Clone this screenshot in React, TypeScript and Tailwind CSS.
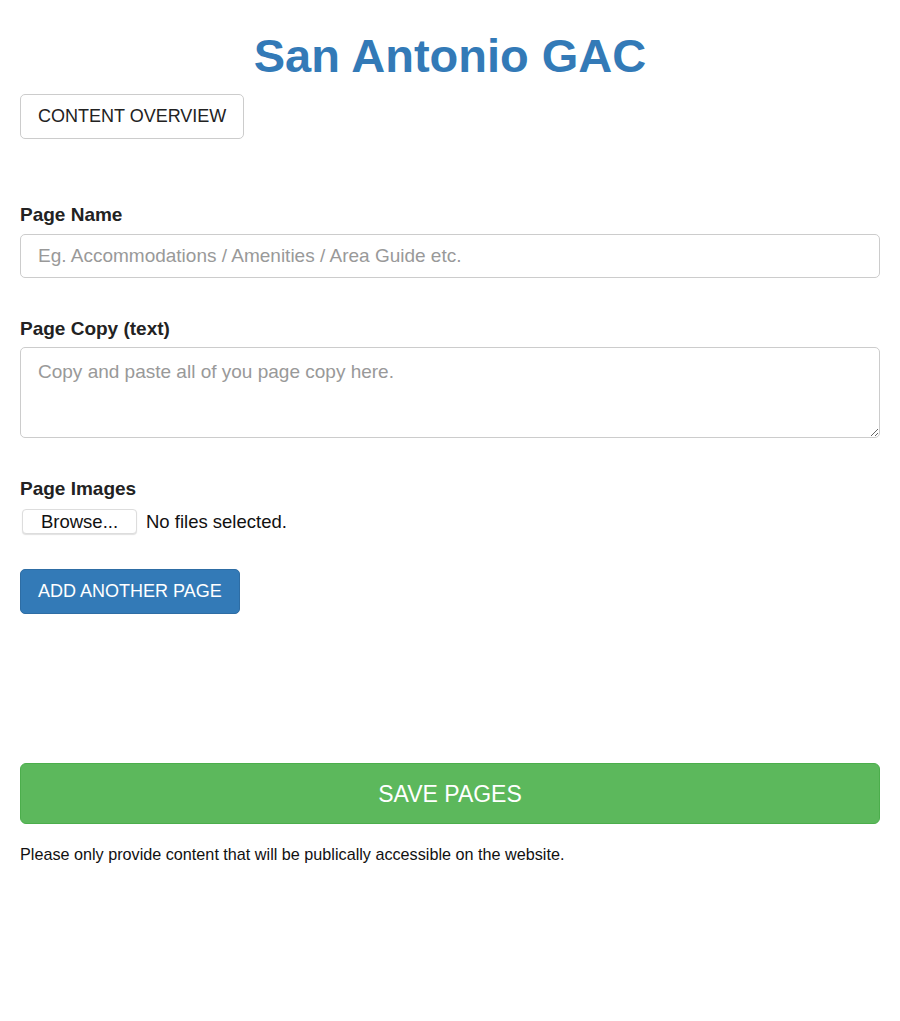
export default function App() {
  return (
    <div
      className="min-h-screen bg-white px-5 text-[#333]"
      style={{ fontFamily: '"Liberation Sans", Arial, Helvetica, sans-serif' }}
    >
      <h1 className="pt-[30px] text-center text-[47px] font-bold leading-[1.1] text-[#337ab7]">
        San Antonio GAC
      </h1>

      <button className="mt-[12px] rounded-[5px] border border-[#ccc] bg-white px-[17px] py-[10px] text-[18px] leading-[23px] text-[#222]">
        CONTENT OVERVIEW
      </button>

      <div className="mt-[62px]">
        <label className="block text-[19px] font-bold leading-[27px] text-[#222]">Page Name</label>
        <input
          type="text"
          placeholder="Eg. Accommodations / Amenities / Area Guide etc."
          className="mt-[6px] block h-[44px] w-full rounded-[5px] border border-[#ccc] px-[17px] text-[19px] text-[#555] placeholder:text-[#999] focus:outline-none"
        />
      </div>

      <div className="mt-[37px]">
        <label className="block text-[19px] font-bold leading-[27px] text-[#222]">Page Copy (text)</label>
        <textarea
          placeholder="Copy and paste all of you page copy here."
          className="mt-[5px] block h-[91px] w-full rounded-[5px] border border-[#ccc] px-[17px] py-[11px] text-[19px] leading-[26px] text-[#555] placeholder:text-[#999] focus:outline-none"
        />
      </div>

      <div className="mt-[37px]">
        <label className="block text-[19px] font-bold leading-[27px] text-[#222]">Page Images</label>
        <div className="mt-[6px] flex items-center gap-[9px] text-[18.5px] text-[#111]">
          <span className="ml-[2px] flex h-[25px] w-[115px] items-center justify-center rounded-[4px] border border-[#ddd] bg-white shadow-[0_1px_1px_rgba(0,0,0,0.12)]">
            Browse...
          </span>
          <span>No files selected.</span>
        </div>
      </div>

      <button className="mt-[34px] rounded-[5px] border border-[#2e6da4] bg-[#337ab7] px-[17px] py-[10px] text-[18px] leading-[23px] text-white">
        ADD ANOTHER PAGE
      </button>

      <button className="mt-[149px] block h-[61px] w-full rounded-[6px] border border-[#4cae4c] bg-[#5cb85c] text-[23px] text-white">
        SAVE PAGES
      </button>

      <p className="mt-[19px] text-[16.2px] leading-[22px] text-[#111]">
        Please only provide content that will be publically accessible on the website.
      </p>
    </div>
  );
}
